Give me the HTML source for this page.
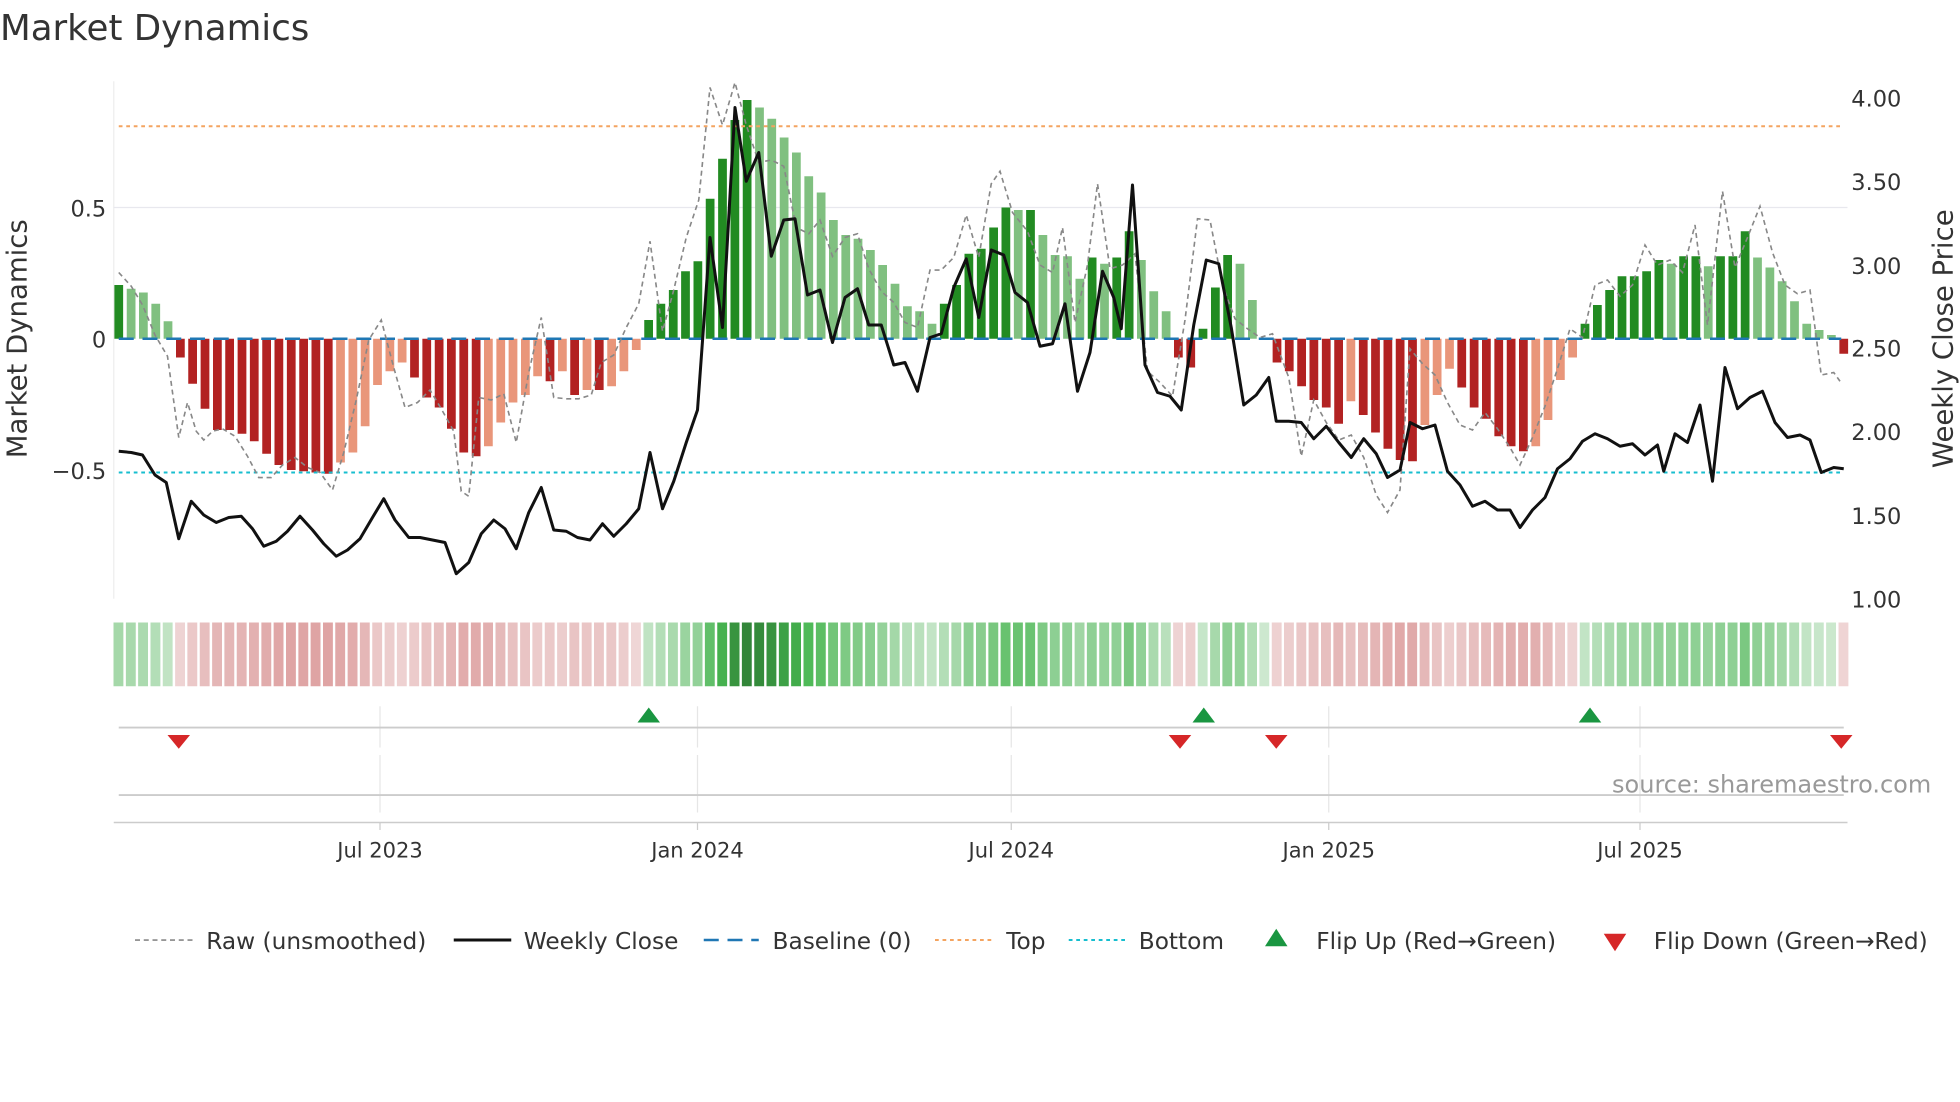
<!DOCTYPE html>
<html><head><meta charset="utf-8"><style>
html,body{margin:0;padding:0;background:#fff;}
svg{display:block;font-family:"DejaVu Sans","Liberation Sans",sans-serif;}
</style></head><body>
<svg id="s" width="1960" height="1102" viewBox="0 0 1568 881.6" xmlns="http://www.w3.org/2000/svg">
<rect width="1568" height="882" fill="#fff"/>
<text x="0" y="32" font-size="28.5" fill="#333">Market Dynamics</text>
<line x1="91" y1="65" x2="91" y2="479" stroke="#eee" stroke-width="1"/>
<line x1="91" y1="166" x2="1478" y2="166" stroke="#e8e8ee" stroke-width="1"/>
<g id="bars"></g>
<g id="heat"></g>
<line x1="95" y1="101" x2="1473" y2="101" stroke="#f4a460" stroke-width="1.6" stroke-dasharray="3,3"/>
<line x1="95" y1="378" x2="1473" y2="378" stroke="#17becf" stroke-width="1.6" stroke-dasharray="3,3"/>
<line x1="95" y1="271" x2="1473" y2="271" stroke="#1f77b4" stroke-width="2" stroke-dasharray="12,7"/>
<polyline id="raw" fill="none" stroke="#888" stroke-width="1.3" stroke-dasharray="4,3"/>
<polyline id="px" fill="none" stroke="#111" stroke-width="2.4" stroke-linejoin="round"/>
<g font-size="18" fill="#333">
<text x="85" y="173" text-anchor="end">0.5</text>
<text x="85" y="278" text-anchor="end">0</text>
<text x="85" y="383" text-anchor="end">−0.5</text>
<text x="1481" y="85">4.00</text><text x="1481" y="152">3.50</text><text x="1481" y="219">3.00</text>
<text x="1481" y="285">2.50</text><text x="1481" y="352">2.00</text><text x="1481" y="419">1.50</text><text x="1481" y="486">1.00</text>
<text transform="translate(21,271) rotate(-90)" text-anchor="middle" font-size="22">Market Dynamics</text>
<text transform="translate(1562,271) rotate(-90)" text-anchor="middle" font-size="22">Weekly Close Price</text>
</g>
<g stroke="#e6e6e6" stroke-width="1">
<line x1="304" y1="565" x2="304" y2="598"/><line x1="558" y1="565" x2="558" y2="598"/><line x1="809" y1="565" x2="809" y2="598"/><line x1="1063" y1="565" x2="1063" y2="598"/><line x1="1312" y1="565" x2="1312" y2="598"/>
<line x1="304" y1="604" x2="304" y2="650"/><line x1="558" y1="604" x2="558" y2="650"/><line x1="809" y1="604" x2="809" y2="650"/><line x1="1063" y1="604" x2="1063" y2="650"/><line x1="1312" y1="604" x2="1312" y2="650"/>
</g>
<line x1="95" y1="582" x2="1475" y2="582" stroke="#ccc" stroke-width="1.5"/>
<line x1="95" y1="636" x2="1475" y2="636" stroke="#ccc" stroke-width="1.5"/>
<line x1="91" y1="658" x2="1478" y2="658" stroke="#ccc" stroke-width="1.2"/>
<g stroke="#ccc"><line x1="304" y1="658" x2="304" y2="664"/><line x1="558" y1="658" x2="558" y2="664"/><line x1="809" y1="658" x2="809" y2="664"/><line x1="1063" y1="658" x2="1063" y2="664"/><line x1="1312" y1="658" x2="1312" y2="664"/></g>
<g id="flips"></g>
<text x="1545" y="634" text-anchor="end" font-size="19.2" fill="#999">source: sharemaestro.com</text>
<g font-size="16.8" fill="#333" text-anchor="middle">
<text x="304" y="686">Jul 2023</text><text x="558" y="686">Jan 2024</text><text x="809" y="686">Jul 2024</text><text x="1063" y="686">Jan 2025</text><text x="1312" y="686">Jul 2025</text>
</g>
<g font-size="18.6" fill="#333">
<line x1="108" y1="752" x2="154" y2="752" stroke="#888" stroke-width="1.3" stroke-dasharray="4,3"/>
<text x="165" y="759">Raw (unsmoothed)</text>
<line x1="363" y1="752" x2="409" y2="752" stroke="#111" stroke-width="2.4"/>
<text x="419" y="759">Weekly Close</text>
<line x1="563" y1="752" x2="607" y2="752" stroke="#1f77b4" stroke-width="2" stroke-dasharray="12,7"/>
<text x="618" y="759">Baseline (0)</text>
<line x1="748" y1="752" x2="793" y2="752" stroke="#f4a460" stroke-width="1.6" stroke-dasharray="3,3"/>
<text x="805" y="759">Top</text>
<line x1="855" y1="752" x2="900" y2="752" stroke="#17becf" stroke-width="1.6" stroke-dasharray="3,3"/>
<text x="911" y="759">Bottom</text>
<polygon points="1021,743 1030,757 1012,757" fill="#1a9641"/>
<text x="1053" y="759">Flip Up (Red→Green)</text>
<polygon points="1283,747 1301,747 1292,761" fill="#d62728"/>
<text x="1323" y="759">Flip Down (Green→Red)</text>
</g>
</svg>
<script>
var tops=[228,231,234,243,257,
286,307,327,344,344,347,353,363,372,376,377,378,379,370,362,341,308,297,290,302,318,326,343,362,365,357,338,322,316,301,305,297,316,312,312,309,297,280,
256,243,232,217,209,159,127,96,80,86,95,110,122,141,154,176,188,191,200,212,227,245,249,259,243,228,203,199,182,166,168,168,188,204,205,223,206,211,206,185,208,233,249,
286,294,263,230,204,211,240,270,
290,297,309,320,326,339,321,332,346,359,368,369,340,316,295,310,326,335,349,357,361,357,336,304,286,
259,244,232,221,221,217,208,211,205,205,213,205,205,185,206,214,225,241,259,264,268,283];
var N=tops.length,x0=95,x1=1475,dx=(x1-x0)/(N-1),Z=271;
var b='',h='';
for(var i=0;i<N;i++){
 var t=tops[i],x=x0+i*dx,v=Z-t,pv=i>0?Z-tops[i-1]:0,c;
 if(v>=0){c=(v>=pv)?'#228b22':'#80c080';}else{c=(v<=pv)?'#b22222':'#e9967a';}
 var y=Math.min(t,Z),hh=Math.abs(Z-t);
 b+='<rect x="'+(x-3.5).toFixed(1)+'" y="'+y+'" width="7" height="'+hh+'" fill="'+c+'"/>';
 var a=Math.min(1,Math.abs(v)/190);
 var hc;
 if(v>=0){var l=0.86-0.5*a;hc='hsl(125,'+(38+8*a)+'%,'+(l*100)+'%)';}
 else{var l=0.9-0.25*a;hc='hsl(0,'+(45+5*a)+'%,'+(l*100)+'%)';}
 h+='<rect x="'+(x-4.2).toFixed(1)+'" y="498" width="7.9" height="51" fill="'+hc+'"/>';
}
document.getElementById('bars').innerHTML=b;
document.getElementById('heat').innerHTML=h;
var px=[95,361,105,362,114,364,124,380,133,386,143,431,153,401,163,412,173,418,183,414,193,413,202,423,211,437,221,433,230,425,240,413,250,424,259,435,269,445,278,440,288,431,298,414,307,399,316,416,327,430,336,430,346,432,356,434,365,459,375,450,385,427,395,416,404,423,413,439,423,410,433,390,443,424,453,425,462,430,472,432,482,419,491,429,501,419,511,407,520,362,530,407,539,385,549,354,558,328,568,190,578,262,588,86,597,145,607,122,617,205,627,176,636,175,646,236,656,232,666,274,676,238,686,231,695,260,705,260,715,292,724,290,734,313,744,270,753,267,763,230,773,207,783,254,793,200,803,204,812,234,822,242,832,277,842,275,852,243,862,313,872,282,882,217,891,238,897,263,906,148,916,292,926,314,936,317,945,328,955,260,965,208,975,211,985,262,995,324,1005,316,1015,302,1021,337,1031,337,1041,338,1051,351,1061,341,1071,354,1081,366,1091,351,1101,363,1110,382,1120,376,1128,338,1138,343,1148,340,1158,377,1168,388,1178,405,1188,401,1198,408,1208,408,1216,422,1226,408,1236,398,1246,375,1256,367,1266,353,1276,347,1286,351,1296,357,1306,355,1316,364,1326,356,1331,377,1340,347,1350,354,1360,324,1370,385,1380,294,1390,327,1400,318,1410,313,1420,338,1430,350,1440,348,1448,352,1457,378,1467,374,1475,375];
var raw=[95,218,105,229,114,244,124,268,134,285,143,350,150,322,157,345,163,352,170,345,178,343,188,349,198,365,207,382,217,382,226,372,236,366,246,374,256,378,266,392,275,362,285,320,295,272,305,256,315,294,324,326,334,322,344,312,353,327,363,345,369,393,375,397,383,318,393,320,403,315,413,354,423,298,433,254,443,318,453,319,463,319,473,316,481,290,491,284,501,262,511,243,520,193,530,265,539,232,549,190,559,160,568,70,578,100,588,66,597,100,607,130,617,128,627,133,637,182,647,187,656,176,666,205,676,190,686,187,695,215,705,233,715,242,724,258,734,262,744,216,753,216,763,206,773,172,783,206,793,147,800,137,810,170,822,185,832,212,842,218,850,182,860,258,870,212,878,147,888,215,898,212,908,203,918,297,928,306,938,317,948,256,958,175,968,176,978,228,988,255,998,263,1008,270,1018,267,1031,302,1041,365,1051,320,1061,338,1071,352,1081,348,1091,366,1101,396,1110,410,1120,392,1128,279,1138,291,1148,300,1158,322,1168,340,1178,344,1188,330,1198,343,1208,358,1216,372,1226,350,1236,325,1246,295,1256,263,1266,270,1276,228,1286,224,1296,237,1306,228,1316,196,1326,212,1336,208,1346,218,1356,180,1366,260,1378,153,1388,214,1398,190,1408,165,1418,202,1428,228,1438,235,1448,232,1457,300,1467,298,1472,305];
function pts(a){var s=[];for(var i=0;i<a.length;i+=2)s.push(a[i]+','+a[i+1]);return s.join(' ');}
document.getElementById('px').setAttribute('points',pts(px));
document.getElementById('raw').setAttribute('points',pts(raw));
var f='';
[519,963,1272].forEach(function(x){f+='<polygon points="'+x+',566 '+(x+9)+',578 '+(x-9)+',578" fill="#1a9641"/>';});
[143,944,1021,1473].forEach(function(x){f+='<polygon points="'+(x-9)+',588 '+(x+9)+',588 '+x+',599" fill="#d62728"/>';});
document.getElementById('flips').innerHTML=f;
</script>
</body></html>
